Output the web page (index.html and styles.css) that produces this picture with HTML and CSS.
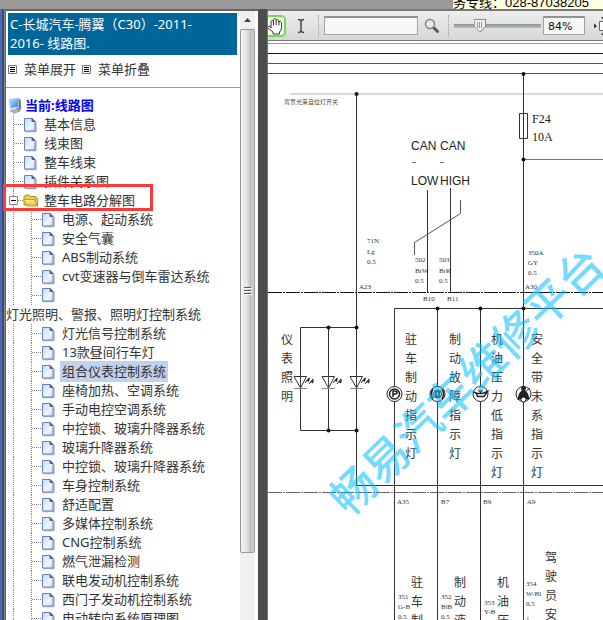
FILE: index.html
```html
<!DOCTYPE html>
<html lang="zh-CN">
<head>
<meta charset="utf-8">
<title>线路图</title>
<link rel="stylesheet" href="styles.css">
</head>
<body>
<svg class="defs" aria-hidden="true">
  <defs>
    <linearGradient id="paper" x1="0" y1="0" x2="1" y2="1"><stop offset="0" stop-color="#b9dcff"/><stop offset=".6" stop-color="#eef6ff"/><stop offset="1" stop-color="#c9dcfa"/></linearGradient>
    <linearGradient id="gold" x1="0" y1="0" x2="0" y2="1"><stop offset="0" stop-color="#fff6a0"/><stop offset="1" stop-color="#e8b52c"/></linearGradient>
    <linearGradient id="screen" x1="0" y1="0" x2="1" y2="1"><stop offset="0" stop-color="#bfe8ff"/><stop offset="1" stop-color="#1c7fe0"/></linearGradient>
    <symbol id="page" viewBox="0 0 14 16"><path d="M2 14.500h11V5" fill="none" stroke="#b8b8c8" stroke-width="1.500"/><path d="M1.500 1.500h7.500l3 3v9.500h-10.500z" fill="url(#paper)" stroke="#6a80bc"/><path d="M9 1.500v3h3z" fill="#5a6cae" stroke="#4a5c9e"/></symbol>
    <symbol id="led" viewBox="0 0 30 16" overflow="visible"><path d="M1 2.500h12.500L7.500 14z" fill="#fff" stroke="#333"/><path d="M7.500 0v14" stroke="#444"/><path d="M1 14.500h13" stroke="#888"/><path d="M12 9l4-5M16 10l4-5" stroke="#222"/><path d="M13.500 6.500l3.500-3-1 4.500zM17.500 8l3.500-3-1 4.500z" fill="#222"/></symbol>
  </defs>
</svg>
<header class="banner"><p class="hotline">务专线：<span>028-87038205</span></p></header>
<main class="workspace">
  <div class="edge"></div>
  <aside class="sidebar">
    <div class="panel">
      <h1 class="title">C-长城汽车-腾翼（C30）-2011-<wbr>2016- 线路图.</h1>
      <div class="actions">
        <button type="button"><svg width="9" height="9" viewBox="0 0 9 9"><path d="M.5.5h8v8h-8z" fill="#fff" stroke="#777"/><path d="M2 2.500h5M2 4.500h5M2 6.500h5" stroke="#000"/></svg>菜单展开</button>
        <button type="button"><svg width="9" height="9" viewBox="0 0 9 9"><path d="M.5.5h8v8h-8z" fill="#fff" stroke="#777"/><path d="M2 2.500h5M2 4.500h5M2 6.500h5" stroke="#000"/></svg>菜单折叠</button>
      </div>
      <nav class="tree">
        <a class="root" href="#"><svg width="14" height="17" viewBox="0 0 14 17"><path d="M8 11l4-7 1.500 8-3 3z" fill="#8795a8"/><path d="M2 13.500l7-1.500 3 2-6 2.500z" fill="#a8b2c0" stroke="#77828f" stroke-width=".5"/><path d="M1 2.500L10 1l1 9-8.500 1.500z" fill="url(#screen)" stroke="#c8d4e2"/><path d="M10.500 1l2 1.500.5 8-2 .5z" fill="#68788e"/></svg>当前:线路图</a>
        <ul class="level">
          <li><a href="#"><svg class="doc"><use href="#page"/></svg><span>基本信息</span></a></li>
          <li><a href="#"><svg class="doc"><use href="#page"/></svg><span>线束图</span></a></li>
          <li><a href="#"><svg class="doc"><use href="#page"/></svg><span>整车线束</span></a></li>
          <li><a href="#"><svg class="doc"><use href="#page"/></svg><span>插件关系图</span></a></li>
          <li>
            <a class="folder" href="#"><svg class="toggle" width="9" height="9" viewBox="0 0 9 9"><path d="M.5.5h8v8h-8z" fill="#fff" stroke="#848484"/><path d="M2 4.500h5" stroke="#000"/></svg><svg width="16" height="14" viewBox="0 0 16 14"><path d="M1 11V2.500L2.500 1H6l1.500 1.500H13V11z" fill="#ecc84c" stroke="#b98e20"/><path d="M.5 5.500h11L14.500 12H4z" fill="url(#gold)" stroke="#c79b26"/><path d="M14 4l1 1-.5 7" fill="none" stroke="#a98024"/></svg><span>整车电路分解图</span></a>
            <ul class="level inner">
              <li><a href="#"><svg class="doc"><use href="#page"/></svg><span>电源、起动系统</span></a></li>
              <li><a href="#"><svg class="doc"><use href="#page"/></svg><span>安全气囊</span></a></li>
              <li><a href="#"><svg class="doc"><use href="#page"/></svg><span>ABS制动系统</span></a></li>
              <li><a href="#"><svg class="doc"><use href="#page"/></svg><span>cvt变速器与倒车雷达系统</span></a></li>
              <li><a class="wrapped" href="#"><svg class="doc"><use href="#page"/></svg><span>灯光照明、警报、照明灯控制系统</span></a></li>
              <li><a href="#"><svg class="doc"><use href="#page"/></svg><span>灯光信号控制系统</span></a></li>
              <li><a href="#"><svg class="doc"><use href="#page"/></svg><span>13款昼间行车灯</span></a></li>
              <li><a class="selected" href="#"><svg class="doc"><use href="#page"/></svg><span>组合仪表控制系统</span></a></li>
              <li><a href="#"><svg class="doc"><use href="#page"/></svg><span>座椅加热、空调系统</span></a></li>
              <li><a href="#"><svg class="doc"><use href="#page"/></svg><span>手动电控空调系统</span></a></li>
              <li><a href="#"><svg class="doc"><use href="#page"/></svg><span>中控锁、玻璃升降器系统</span></a></li>
              <li><a href="#"><svg class="doc"><use href="#page"/></svg><span>玻璃升降器系统</span></a></li>
              <li><a href="#"><svg class="doc"><use href="#page"/></svg><span>中控锁、玻璃升降器系统</span></a></li>
              <li><a href="#"><svg class="doc"><use href="#page"/></svg><span>车身控制系统</span></a></li>
              <li><a href="#"><svg class="doc"><use href="#page"/></svg><span>舒适配置</span></a></li>
              <li><a href="#"><svg class="doc"><use href="#page"/></svg><span>多媒体控制系统</span></a></li>
              <li><a href="#"><svg class="doc"><use href="#page"/></svg><span>CNG控制系统</span></a></li>
              <li><a href="#"><svg class="doc"><use href="#page"/></svg><span>燃气泄漏检测</span></a></li>
              <li><a href="#"><svg class="doc"><use href="#page"/></svg><span>联电发动机控制系统</span></a></li>
              <li><a href="#"><svg class="doc"><use href="#page"/></svg><span>西门子发动机控制系统</span></a></li>
              <li><a href="#"><svg class="doc"><use href="#page"/></svg><span>电动转向系统原理图</span></a></li>
            </ul>
          </li>
        </ul>
      </nav>
    </div>
    <div class="scrollbar"><div class="arrow"><svg width="7" height="4" viewBox="0 0 7 4"><path d="M0 4l3.500-4L7 4z" fill="#444"/></svg></div><div class="thumb"><svg width="8" height="8" viewBox="0 0 8 8"><path d="M0 .5h7M0 3.500h7M0 6.500h7" stroke="#555"/><path d="M1 1.500h7M1 4.500h7M1 7.500h7" stroke="#fff"/></svg></div></div>
  </aside>
  <div class="splitter"></div>
  <section class="viewer">
    <div class="toolbar">
      <button class="hand" type="button" aria-label="Hand"><svg width="17" height="18" viewBox="0 0 17 18"><path d="M0 9.500q2-1.500 3 1.500V4.500q1-2 2.500 0V2.500q1.200-2 2.700 0v1q1.300-2 2.700 0v1.500q1.500-1.500 2.600.5v5q0 3-2 4.500v2H5v-2L0 11M5.500 4.500v4M8.200 3v5M10.900 4v4.500" fill="#fff" stroke="#333"/></svg></button>
      <button class="ibeam" type="button" aria-label="Select text"><svg width="8" height="16" viewBox="0 0 8 16"><path d="M1 1.500q2.500 0 3 1.500 .5-1.500 3-1.500M4 2v12M1 14.500q2.500 0 3-1.500 .5 1.500 3 1.500" fill="none" stroke="#444" stroke-width="1.500"/></svg></button>
      <i class="rule"></i>
      <input class="search" type="text" aria-label="Search">
      <button class="find" type="button" aria-label="Find"><svg width="16" height="16" viewBox="0 0 16 16"><path d="M9.500 9.500l4 4" stroke="#555b5b" stroke-width="3" stroke-linecap="round"/><circle cx="6" cy="6" r="4.500" fill="#e2eaea" stroke="#7c8585" stroke-width="1.500"/></svg></button>
      <i class="rule"></i>
      <input class="zoom" type="range" min="0" max="100" value="27" aria-label="Zoom">
      <input class="percent" type="text" value="84%" aria-label="Zoom level">
      <button class="fit" type="button" aria-label="Fit"><svg width="18" height="18" viewBox="0 0 18 18"><path d="M5.500 4.500h8v9h-8z" fill="#fff" stroke="#666"/><path d="M0 6.500v5L3 9zM7 0h5L9.500 3zM7 18h5L9.500 15z" fill="#333"/></svg></button>
    </div>
    <svg class="sheet" role="img" aria-label="组合仪表线路图">
      <g transform="translate(-268 -41)">
        <path d="M268 43.500H3000" stroke="#999"/>
        <path d="M268 53.500H3000" stroke="#111"/>
        <path d="M268 63.500H3000M268 73.500H3000" stroke="#555"/>
        <path d="M290 94H3000" stroke="#b4b4b4"/>
        <path d="M268 292.500H3000" stroke="#111" stroke-dasharray="14 1 2 1"/>
        <path d="M268 492.500H3000" stroke="#666" stroke-dasharray="14 1 2 1"/>
        <g fill="none" stroke="#333">
          <path d="M356.500 94V485.500H3000M523.500 73V2000M519.500 113.500h8v25h-8zM427.500 190V292M450.500 188V292"/>
          <path d="M523.500 159.500H3000" stroke="#777"/>
          <path d="M414.500 255V242.500L460.500 213.500V200" stroke="#555"/>
          <path d="M394.500 2000V308.500H3000M437.500 308V2000M480.500 308V2000"/>
          <path d="M356.500 327.500H300.500V430.500H356.500M328.500 327V430"/>
        </g>
        <g fill="#111"><circle cx="356.500" cy="94" r="2"/><circle cx="523.500" cy="74" r="2"/><circle cx="523.500" cy="159.500" r="2"/><circle cx="437.500" cy="308.500" r="2"/><circle cx="480.500" cy="308.500" r="2"/><circle cx="523.500" cy="308.500" r="2"/><circle cx="328.500" cy="327.500" r="2"/><circle cx="356.500" cy="327.500" r="2"/><circle cx="328.500" cy="430.500" r="2"/><circle cx="356.500" cy="430.500" r="2"/></g>
        <use href="#led" x="293" y="374" width="30" height="16"/><use href="#led" x="321" y="374" width="30" height="16"/><use href="#led" x="349" y="374" width="30" height="16"/>
        <g fill="#fff" stroke="#222">
          <circle cx="394.500" cy="394" r="7.500"/><circle cx="394.500" cy="394" r="5" stroke-width="1.500"/><path d="M393 397v-6h2q2 0 2 1.500t-2 1.500h-2" fill="none" stroke-width="1.500"/>
          <circle cx="437.500" cy="394" r="7.500"/><circle cx="437.500" cy="394" r="4"/><path d="M433 389q-3 5 0 10M442 389q3 5 0 10M436 391.500v5h3v-5z" stroke-width="1.500"/>
          <circle cx="480.500" cy="394" r="7.500"/><path d="M473.500 392l4 1.500h5l5-2-3.500 5h-6.500l-1-3M480.500 391v2M478.500 391h4" stroke-width="1.500"/>
          <circle cx="523.500" cy="394" r="7.500"/><circle cx="523.500" cy="388.500" r="2" fill="#222"/><path d="M518.500 399q0-7 5-9 5 2 5 9zM517.500 400l12-12" fill="#222"/><circle cx="523.500" cy="399.500" r="2.500"/>
        </g>
        <g class="label">
          <text x="411" y="150">CAN</text><text x="440" y="150">CAN</text>
          <text x="411" y="185">LOW</text><text x="440" y="185">HIGH</text>
        </g>
        <path d="M412 162.500h4M440 162.500h4" stroke="#777"/>
        <g class="fuse"><text x="532" y="123">F24</text><text x="532" y="141">10A</text></g>
        <text class="note" x="284" y="104">背景光来自位灯开关</text>
        <g class="wire">
          <text><tspan x="367" y="243">71N</tspan><tspan x="367" y="254">Lg</tspan><tspan x="367" y="264">0.5</tspan></text>
          <text><tspan x="415" y="262">502</tspan><tspan x="415" y="273">BrW</tspan><tspan x="415" y="283">0.5</tspan></text>
          <text><tspan x="439" y="262">503</tspan><tspan x="439" y="273">BrR</tspan><tspan x="439" y="283">0.5</tspan></text>
          <text><tspan x="528" y="255">350A</tspan><tspan x="528" y="265">GY</tspan><tspan x="528" y="275">0.5</tspan></text>
          <text x="359" y="289">A23</text><text x="525" y="289">A30</text><text x="423" y="301">B10</text><text x="447" y="301">B11</text>
          <text x="397" y="504">A35</text><text x="441" y="504">B7</text><text x="483" y="504">B9</text><text x="527" y="504">A9</text>
          <text><tspan x="398" y="599">351</tspan><tspan x="398" y="609">G-B</tspan><tspan x="398" y="619">0.5</tspan></text>
          <text><tspan x="441" y="599">352</tspan><tspan x="441" y="609">BlB</tspan><tspan x="441" y="619">0.5</tspan></text>
          <text><tspan x="484" y="605">353</tspan><tspan x="484" y="614">Y-B</tspan><tspan x="484" y="624">0.5</tspan></text>
          <text><tspan x="526" y="586">354</tspan><tspan x="526" y="596">W-Bl</tspan><tspan x="526" y="606">0.5</tspan><tspan x="526" y="621">1</tspan></text>
        </g>
        <g class="name">
          <text><tspan x="287" y="344">仪</tspan><tspan x="287" dy="19">表</tspan><tspan x="287" dy="19">照</tspan><tspan x="287" dy="19">明</tspan></text>
          <text><tspan x="411" y="344">驻</tspan><tspan x="411" dy="19">车</tspan><tspan x="411" dy="19">制</tspan><tspan x="411" dy="19">动</tspan><tspan x="411" dy="19">指</tspan><tspan x="411" dy="19">示</tspan><tspan x="411" dy="19">灯</tspan></text>
          <text><tspan x="455" y="344">制</tspan><tspan x="455" dy="19">动</tspan><tspan x="455" dy="19">故</tspan><tspan x="455" dy="19">障</tspan><tspan x="455" dy="19">指</tspan><tspan x="455" dy="19">示</tspan><tspan x="455" dy="19">灯</tspan></text>
          <text><tspan x="497" y="344">机</tspan><tspan x="497" dy="19">油</tspan><tspan x="497" dy="19">压</tspan><tspan x="497" dy="19">力</tspan><tspan x="497" dy="19">低</tspan><tspan x="497" dy="19">指</tspan><tspan x="497" dy="19">示</tspan><tspan x="497" dy="19">灯</tspan></text>
          <text><tspan x="537" y="344">安</tspan><tspan x="537" dy="19">全</tspan><tspan x="537" dy="19">带</tspan><tspan x="537" dy="19">未</tspan><tspan x="537" dy="19">系</tspan><tspan x="537" dy="19">指</tspan><tspan x="537" dy="19">示</tspan><tspan x="537" dy="19">灯</tspan></text>
          <text><tspan x="417" y="587">驻</tspan><tspan x="417" dy="19">车</tspan><tspan x="417" dy="19">制</tspan></text>
          <text><tspan x="460" y="587">制</tspan><tspan x="460" dy="19">动</tspan><tspan x="460" dy="19">液</tspan></text>
          <text><tspan x="503" y="587">机</tspan><tspan x="503" dy="19">油</tspan><tspan x="503" dy="19">压</tspan></text>
          <text><tspan x="551" y="562">驾</tspan><tspan x="551" dy="19">驶</tspan><tspan x="551" dy="19">员</tspan><tspan x="551" dy="19">安</tspan></text>
        </g>
        <text class="watermark" transform="translate(349 518) rotate(-44)">畅易汽车维修平台</text>
      </g>
    </svg>
  </section>
</main>
</body>
</html>
```
FILE: styles.css
```css
* { box-sizing: border-box; }

body {
  margin: 0;
  height: 100vh;
  overflow: hidden;
  display: flex;
  flex-direction: column;
  background: #999;
  color: #333;
  font: 13px/19px "Noto Sans", "Noto Sans CJK SC", sans-serif;
}

button {
  border: 0;
  padding: 0;
  background: none;
  color: inherit;
  font: inherit;
}

a { color: inherit; text-decoration: none; }
svg { flex: none; }
.defs { position: absolute; width: 0; height: 0; }

.banner {
  height: 9px;
  flex: none;
  display: flex;
  align-items: flex-end;
  justify-content: flex-end;
  overflow: hidden;
}

.hotline {
  margin: 0;
  width: 150px;
  background: #ffffe1;
  color: #000;
  font: 13px/12px "Liberation Sans", "Noto Sans CJK SC", sans-serif;
  white-space: nowrap;
}

.workspace {
  flex: 1;
  min-height: 0;
  display: flex;
  overflow: hidden;
}

.edge {
  width: 5px;
  flex: none;
  margin-top: -9px;
  border-left: 2px solid #4a6cb8;
  border-right: 1px solid #888;
  background: #3c4a78;
}

.sidebar {
  width: 253px;
  flex: none;
  display: flex;
  border: solid #666;
  border-width: 2px 0 0 1px;
  background: #fff;
}

.panel { flex: 1; min-width: 0; }

.title {
  margin: 2px 3px 0 2px;
  padding: 2px 16px 2px 2px;
  background: #069;
  color: #fff;
  font-size: 13px;
  line-height: 19px;
  font-weight: 400;
}

.actions {
  display: flex;
  gap: 6px;
  height: 33px;
  padding: 0 2px 3px;
  align-items: center;
  border-bottom: 1px solid #999;
}

.actions button {
  display: flex;
  align-items: center;
  gap: 7px;
}

.tree { padding-top: 8px; }

.root {
  display: flex;
  align-items: center;
  gap: 3px;
  padding-left: 2px;
  color: #00f;
  font-weight: 700;
}

.level { margin: 0; padding: 0; list-style: none; }

.level a {
  height: 19px;
  display: flex;
  align-items: center;
  gap: 7px;
  padding-left: 17px;
  position: relative;
  white-space: nowrap;
  background:
    repeating-linear-gradient(#888 0 1px, transparent 1px 2px) 7px 0 / 1px 100% no-repeat,
    repeating-linear-gradient(90deg, #888 0 1px, transparent 1px 2px) 8px 9px / 9px 1px no-repeat;
}

.level.inner a {
  padding-left: 35px;
  background:
    repeating-linear-gradient(#888 0 1px, transparent 1px 2px) 7px 0 / 1px 19px no-repeat,
    repeating-linear-gradient(#888 0 1px, transparent 1px 2px) 25px 0 / 1px 19px no-repeat,
    repeating-linear-gradient(90deg, #888 0 1px, transparent 1px 2px) 26px 9px / 9px 1px no-repeat;
}

.doc { width: 14px; height: 16px; }

.level .folder { gap: 5px; }
.folder .toggle { position: absolute; left: 3px; top: 5px; }

.folder::after {
  content: "";
  box-sizing: border-box;
  position: absolute;
  left: -3px;
  top: -7px;
  width: 150px;
  height: 27px;
  border: 3px solid #fb3b3b;
  z-index: 1;
}

.level.inner .wrapped {
  height: auto;
  flex-direction: column;
  align-items: flex-start;
  gap: 0;
  padding: 0;
}

.wrapped .doc { margin: 1px 0 2px 35px; }

.selected span { margin-left: -2px; padding: 1px 2px; background: #c1d2ee; }

.scrollbar {
  width: 18px;
  display: flex;
  flex-direction: column;
  border-right: 3px solid #fff;
  background: #f0f0f0;
}

.arrow { height: 18px; display: grid; place-items: center; }

.thumb {
  height: 86%;
  display: grid;
  place-items: center;
  border: 1px solid #999;
  border-radius: 2px;
  background: linear-gradient(90deg, #f4f4f4, #e4e4e6 45%, #bdbdc3 75%, #d0d0d4);
}

.splitter { width: 9px; flex: none; background: #4d4d4d; }

.viewer {
  flex: 1;
  min-width: 0;
  display: flex;
  flex-direction: column;
  border: solid #777;
  border-width: 2px 0 0 1px;
  background: #fff;
}

.toolbar {
  height: 30px;
  flex: none;
  display: flex;
  align-items: center;
  overflow: hidden;
  border-bottom: 1px solid #777;
  background: linear-gradient(#eee, #d6d6d6);
}

.toolbar > * { flex: none; }

.hand {
  width: 18px;
  height: 22px;
  display: flex;
  align-items: center;
  border: 2px solid #72dc4c;
  border-left: 0;
  border-radius: 0 5px 5px 0;
  background: #f6fff2;
}

.ibeam { display: flex; margin: 0 13px 0 11px; }
.rule { height: 22px; border-left: 1px dotted #999; }

.search, .percent {
  height: 19px;
  border: 1px solid #9aa5a5;
  border-top: 2px solid #8a9595;
  border-radius: 0;
  background: #f7f7f7;
}

.search { width: 94px; margin: 0 6px 0 5px; }
.find { display: flex; margin-right: 8px; }

.zoom {
  appearance: none;
  width: 87px;
  height: 16px;
  margin: 0 2px 0 5px;
  background: linear-gradient(#8a9595, #b5bebe) 0 6px / 100% 4px no-repeat;
}

.zoom::-webkit-slider-thumb {
  appearance: none;
  width: 12px;
  height: 14px;
  border: 1px solid #888;
  background:
    linear-gradient(45deg, #888 0 5px, transparent 5px) border-box,
    linear-gradient(-45deg, #888 0 5px, transparent 5px) border-box,
    repeating-linear-gradient(90deg, #999 0 1px, transparent 1px 2px) 2px 2px / 6px 6px no-repeat,
    #eee;
  clip-path: polygon(0 0, 100% 0, 100% 8px, 50% 100%, 0 8px);
}

.percent {
  width: 42px;
  padding: 0 4px;
  color: #111;
  font: 11px "DejaVu Sans", sans-serif;
}

.fit { display: flex; margin-left: 9px; }

.sheet { flex: 1; width: 100%; min-height: 0; overflow: hidden; }
.sheet .label { font: 12px "Liberation Sans Narrow", "Liberation Sans", sans-serif; fill: #222; }
.sheet .fuse { font: 12px "Liberation Serif", serif; fill: #222; }
.sheet .wire { font: 7px "Liberation Serif", serif; fill: #333; }
.sheet .note { font: 6px "Noto Sans CJK SC", sans-serif; fill: #444; }
.sheet .name { font: 12px "Noto Sans CJK SC", sans-serif; fill: #333; text-anchor: middle; }
.sheet .watermark { font: 500 45px "Noto Sans CJK SC", sans-serif; fill: #00bfff; opacity: .55; }
```
